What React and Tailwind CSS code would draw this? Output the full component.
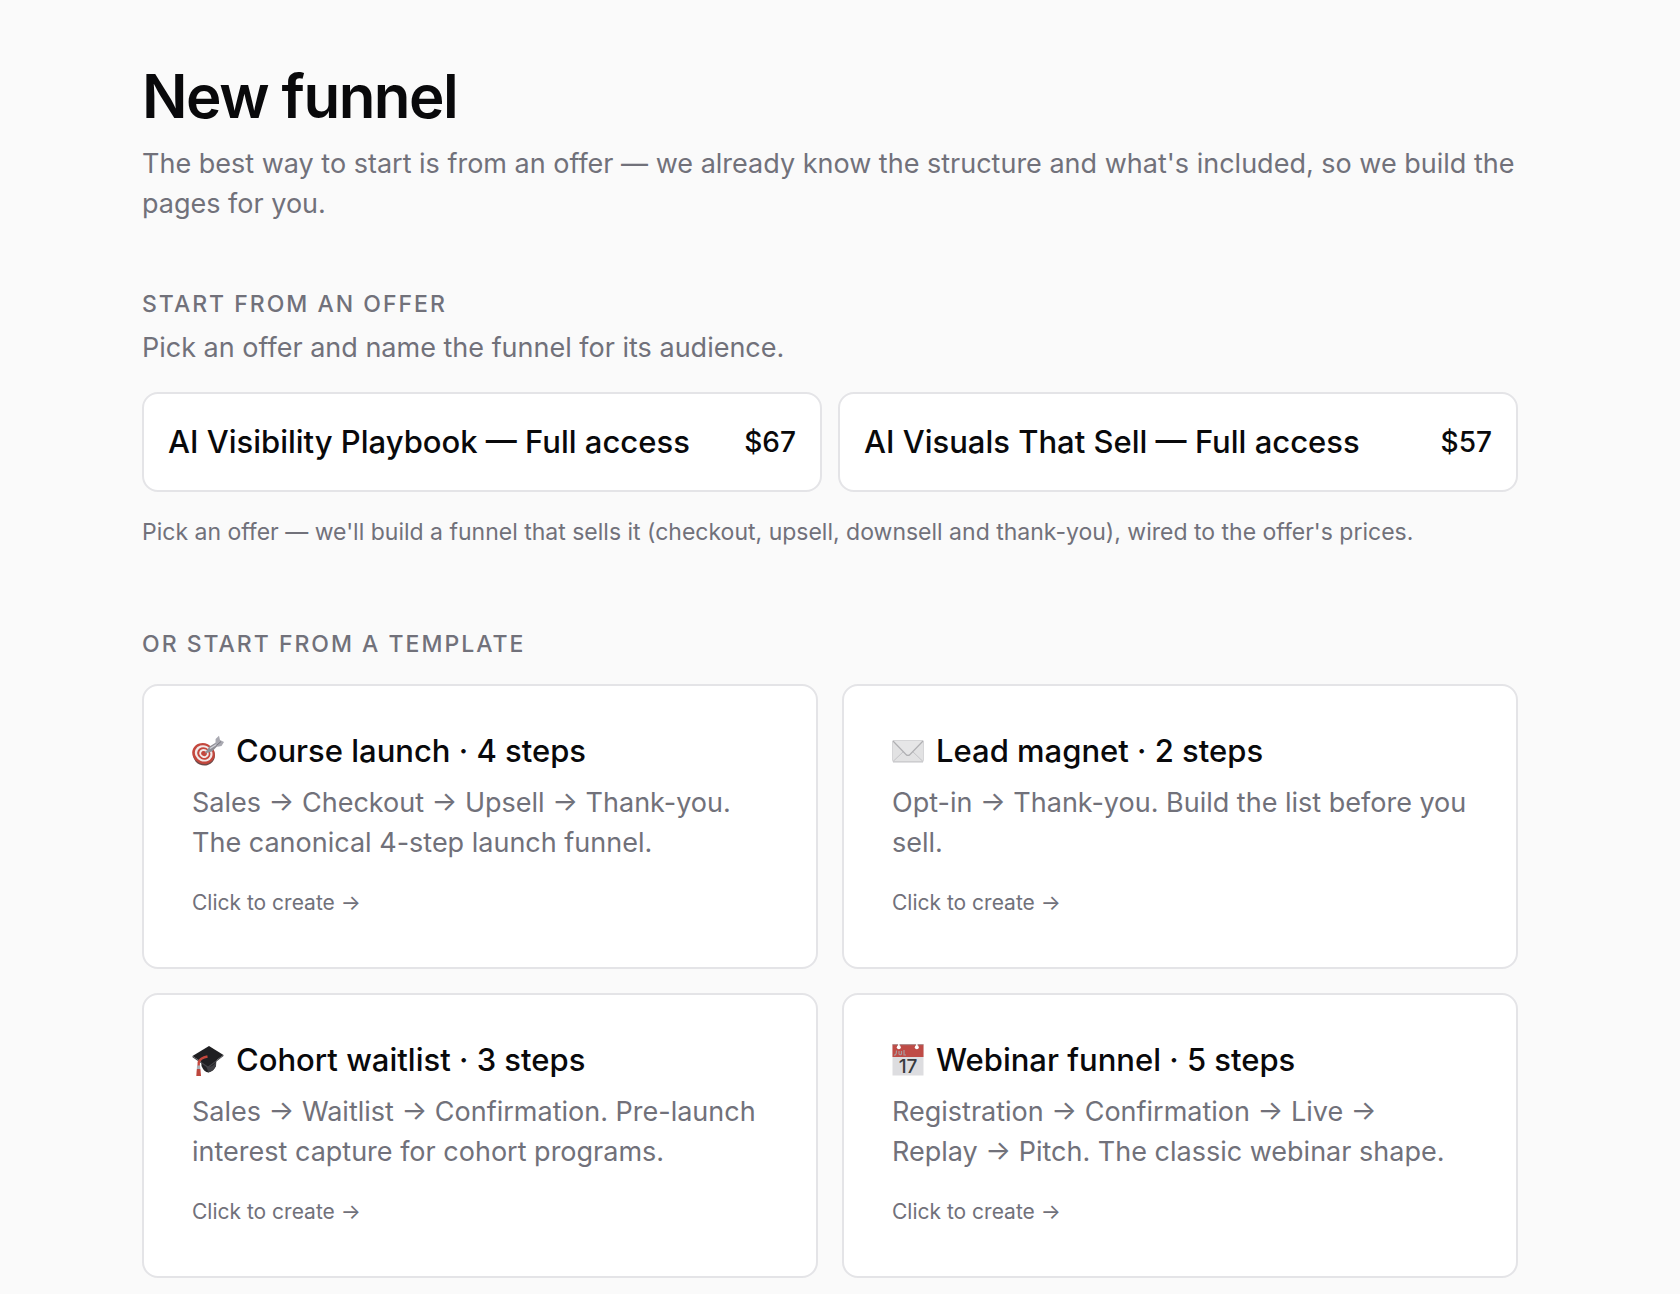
import React from "react";

const offers = [
  { id: "visibility", name: "AI Visibility Playbook — Full access", price: "$67" },
  { id: "visuals", name: "AI Visuals That Sell — Full access", price: "$57" },
];

const TargetIcon = () => (
  <svg className="size-8 shrink-0" viewBox="0 0 32 32" aria-hidden="true">
    <ellipse cx="12" cy="20" rx="11" ry="10.5" fill="#6b4a4a" transform="rotate(25 12 20)" />
    <ellipse cx="11.5" cy="18.5" rx="11.5" ry="10.3" fill="#c4473d" transform="rotate(25 11.5 18.5)" />
    <ellipse cx="11.7" cy="18.4" rx="9" ry="8" fill="#f1e9e9" transform="rotate(25 11.7 18.4)" />
    <ellipse cx="11.8" cy="18.5" rx="6.8" ry="6" fill="#c4473d" transform="rotate(25 11.8 18.5)" />
    <ellipse cx="12" cy="18.5" rx="4.9" ry="4.3" fill="#f1e9e9" transform="rotate(25 12 18.5)" />
    <ellipse cx="12" cy="18.6" rx="2.9" ry="2.5" fill="#c4473d" transform="rotate(25 12 18.6)" />
    <path d="M12.5 18.5 L17.5 11.5 L24 7.5 L26 10.5 L20 16.5 Z" fill="#8f8f96" />
    <path d="M18 13.5 L25 9" stroke="#d4d4da" strokeWidth="1.4" />
    <path d="M23.5 9.5 L23.6 4 L27 0.8 L28 5 L32 7 L29.5 11 L25.6 11.8 Z" fill="#a9a9b1" />
    <path d="M24.5 10.5 L29 6.5" stroke="#77777f" strokeWidth="1" />
  </svg>
);

const EnvelopeIcon = () => (
  <svg className="size-8 shrink-0" viewBox="0 0 32 32" aria-hidden="true">
    <rect x="0.5" y="5.5" width="31" height="21" rx="1" fill="#e2e2e3" stroke="#d6d6d8" />
    <path d="M1 26.5 L12.5 15.5 M31 26.5 L19.5 15.5" stroke="#c4c4c7" strokeWidth="1" fill="none" />
    <path d="M1 6 H31 L18 19.5 Q16 21.5 14 19.5 Z" fill="#e6e6e7" />
    <path d="M1 6 L14 19.5 Q16 21.5 18 19.5 L31 6" stroke="#b0b0b3" strokeWidth="1.2" fill="none" />
    <path d="M1 27 H31" stroke="#c4c4c7" strokeWidth="1" />
  </svg>
);

const CapIcon = () => (
  <svg className="size-8 shrink-0" viewBox="0 0 32 32" aria-hidden="true">
    <path d="M9 15 L9.5 22 Q12 28 16.5 28.5 Q22 27 24 22 L24.5 14 Z" fill="#222225" />
    <path d="M14 22 Q19 25 24 18 L24 22 Q21 27 16.5 28.5 Z" fill="#3f3f44" />
    <path d="M0.5 12 L17 2 L31.5 11 L16 22.5 Z" fill="#1f1f22" />
    <path d="M0.5 12 L16 22.5 L31.5 11 L31.5 12 L16 24 L0.5 13.2 Z" fill="#45454a" />
    <path d="M15.5 12.5 Q8 14 6.8 18 L6.5 25" stroke="#c4473d" strokeWidth="2.4" fill="none" />
    <path d="M5 21.5 H8 L8.4 25 H4.8 Z" fill="#a9b0b8" />
    <path d="M4.8 25 H8.4 L9 32 H4.3 Z" fill="#bd463d" />
  </svg>
);

const CalendarIcon = () => (
  <svg className="size-8 shrink-0" viewBox="0 0 32 32" aria-hidden="true">
    <rect x="0.5" y="0.5" width="31" height="31" fill="#dddde0" />
    <rect x="0.5" y="0.5" width="31" height="12.5" fill="#bf4b46" />
    <path d="M0.5 0.7 H31.5" stroke="#9a8688" strokeWidth="0.8" />
    <path d="M2 11 Q4.5 11.5 4.5 6.5 M7 7 V10 Q8 11.5 9.5 10 V7 M12 6 V11 H14" stroke="#a99a9c" strokeWidth="1.2" fill="none" />
    <circle cx="6.8" cy="3.2" r="2" fill="#ffffff" />
    <circle cx="24.8" cy="3.2" r="2" fill="#ffffff" />
    <path d="M6.8 0 V3 M24.8 0 V3" stroke="#ffffff" strokeWidth="1.4" />
    <text x="16" y="28.5" textAnchor="middle" fontFamily="Inter, sans-serif" fontSize="19" fill="#3a3a3e">
      17
    </text>
  </svg>
);

const templates = [
  {
    id: "course",
    icon: TargetIcon,
    title: "Course launch · 4 steps",
    description: "Sales → Checkout → Upsell → Thank-you. The canonical 4-step launch funnel.",
  },
  {
    id: "lead",
    icon: EnvelopeIcon,
    title: "Lead magnet · 2 steps",
    description: "Opt-in → Thank-you. Build the list before you sell.",
  },
  {
    id: "cohort",
    icon: CapIcon,
    title: "Cohort waitlist · 3 steps",
    description: "Sales → Waitlist → Confirmation. Pre-launch interest capture for cohort programs.",
  },
  {
    id: "webinar",
    icon: CalendarIcon,
    title: "Webinar funnel · 5 steps",
    description: "Registration → Confirmation → Live → Replay → Pitch. The classic webinar shape.",
  },
];

const OfferCard = ({ offer }) => (
  <button
    type="button"
    className="flex items-center justify-between gap-4 rounded-2xl border-2 border-[#e4e4e7] bg-white p-6 text-left font-medium text-[#09090b]"
  >
    <span className="text-[31px] leading-[48px]">{offer.name}</span>
    <span className="text-[28px] leading-[48px]">{offer.price}</span>
  </button>
);

const TemplateCard = ({ template }) => {
  const Icon = template.icon;

  return (
    <button
      type="button"
      className="flex flex-col items-start rounded-2xl border-2 border-[#e4e4e7] bg-white p-12 text-left"
    >
      <span className="flex items-center gap-3 text-[31px] leading-[33px] font-medium text-[#09090b]">
        <Icon />
        {template.title}
      </span>
      <span className="mt-4 text-[27px] leading-10 text-[#71717a]">{template.description}</span>
      <span className="mt-6 text-[21px] leading-8 text-[#71717a]">Click to create →</span>
    </button>
  );
};

export default function App() {
  return (
    <main className="min-h-screen bg-[#fafafa] pt-16 pr-[162px] pb-4 pl-[142px] font-['Inter',sans-serif] text-[#71717a]">
      <header>
        <h1 className="text-[60px] leading-[64px] font-semibold tracking-tight text-[#09090b]">New funnel</h1>
        <p className="mt-4 text-[27px] leading-10">
          The best way to start is from an offer — we already know the structure and what's included, so we build the
          pages for you.
        </p>
      </header>

      <section className="mt-16">
        <h2 className="text-[23px] leading-8 font-medium tracking-[2px] uppercase">Start from an offer</h2>
        <p className="mt-2 text-[27px] leading-10">Pick an offer and name the funnel for its audience.</p>
        <div className="mt-6 grid grid-cols-2 gap-4">
          {offers.map((offer) => (
            <OfferCard key={offer.id} offer={offer} />
          ))}
        </div>
        <p className="mt-6 text-[23px] leading-8">
          Pick an offer — we'll build a funnel that sells it (checkout, upsell, downsell and thank-you), wired to the
          offer's prices.
        </p>
      </section>

      <section className="mt-20">
        <h2 className="text-[23px] leading-8 font-medium tracking-[2px] uppercase">Or start from a template</h2>
        <div className="mt-6 grid grid-cols-2 gap-6">
          {templates.map((template) => (
            <TemplateCard key={template.id} template={template} />
          ))}
        </div>
      </section>
    </main>
  );
}
